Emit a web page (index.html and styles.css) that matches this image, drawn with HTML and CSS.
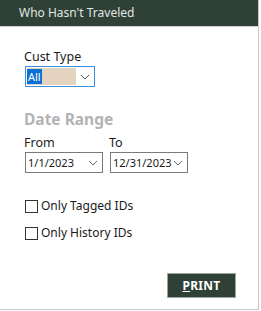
FILE: index.html
```html
<!DOCTYPE html>
<html lang="en">
<head>
  <meta charset="UTF-8">
  <title>Who Hasn't Traveled</title>
  <link rel="stylesheet" href="styles.css">
</head>
<body>
  <div class="window">
    <div class="title-bar">Who Hasn't Traveled</div>

    <div class="content">
      <div class="field">
        <label class="label">Cust Type</label>
        <div class="select cust-select">
          <span class="select-value"><span class="selected-text">All</span></span>
          <span class="chevron">
            <svg width="10" height="6" viewBox="0 0 10 6"><path d="M1 1 L5 5 L9 1" fill="none" stroke="#555" stroke-width="1"/></svg>
          </span>
        </div>
      </div>

      <h3 class="section-title">Date Range</h3>
      <div class="date-row">
        <div class="field">
          <label class="label">From</label>
          <div class="select date-select">
            <span class="date-value">1/1/2023</span>
            <span class="chevron">
              <svg width="10" height="6" viewBox="0 0 10 6"><path d="M1 1 L5 5 L9 1" fill="none" stroke="#666" stroke-width="1"/></svg>
            </span>
          </div>
        </div>
        <div class="field">
          <label class="label">To</label>
          <div class="select date-select">
            <span class="date-value">12/31/2023</span>
            <span class="chevron">
              <svg width="10" height="6" viewBox="0 0 10 6"><path d="M1 1 L5 5 L9 1" fill="none" stroke="#666" stroke-width="1"/></svg>
            </span>
          </div>
        </div>
      </div>

      <div class="checks">
        <label class="check"><span class="box"></span>Only Tagged IDs</label>
        <label class="check"><span class="box"></span>Only History IDs</label>
      </div>

      <div class="actions">
        <button class="print-btn"><u>P</u>RINT</button>
      </div>
    </div>
  </div>
</body>
</html>
```

FILE: styles.css
```css
body {
  margin: 0;
  background: #ffffff;
  font-family: "Noto Sans", "Open Sans", sans-serif;
  color: #1a1a1a;
}

.window {
  width: 258px;
  height: 309px;
  border-right: 1px solid #c8c8c8;
  border-bottom: 1px solid #c8c8c8;
  background: #ffffff;
}

.title-bar {
  height: 26px;
  line-height: 26px;
  background: #2f4036;
  color: #e2e6e3;
  font-size: 12px;
  padding-left: 19px;
  border-bottom: 1px solid #d0d0d0;
}

.content {
  padding: 22px 0 0 25px;
}

.label {
  display: block;
  font-size: 12.5px;
  line-height: 16px;
  margin-bottom: 1px;
  margin-left: -1px;
}

.select {
  display: flex;
  align-items: center;
  height: 19px;
  border: 1px solid #7a7a7a;
  background: #ffffff;
  box-sizing: content-box;
}

.cust-select {
  width: 68px;
  border-color: #3c8ee0;
}

.select-value {
  display: flex;
  align-items: center;
  width: 49px;
  height: 17px;
  margin-left: 1px;
  background: #e4d3bf;
}

.selected-text {
  background: #0a6fd6;
  color: #ffffff;
  font-size: 11px;
  line-height: 15px;
  padding: 0 1px;
}

.chevron {
  margin-left: auto;
  margin-right: 4px;
  display: flex;
}

.section-title {
  margin: 22px 0 0 -1px;
  font-size: 15.5px;
  line-height: 20px;
  font-weight: bold;
  color: #b3b3b3;
}

.date-row {
  display: flex;
  gap: 7px;
  margin-top: 6px;
}

.date-select {
  width: 76px;
}

.date-value {
  font-size: 11px;
  padding-left: 2px;
}

.checks {
  margin-top: 25px;
  display: flex;
  flex-direction: column;
  gap: 11px;
}

.check {
  display: flex;
  align-items: center;
  font-size: 12px;
  line-height: 16px;
}

.box {
  width: 11px;
  height: 11px;
  border: 1px solid #333333;
  margin-right: 3px;
}

.actions {
  display: flex;
  justify-content: flex-end;
  padding-right: 22px;
  margin-top: 32px;
}

.print-btn {
  width: 69px;
  height: 25px;
  background: #2f4036;
  color: #ffffff;
  border: 1px solid #9aa59e;
  font-family: "Noto Sans", "Open Sans", sans-serif;
  font-size: 12px;
  font-weight: bold;
  letter-spacing: 0.3px;
  cursor: pointer;
}
```
